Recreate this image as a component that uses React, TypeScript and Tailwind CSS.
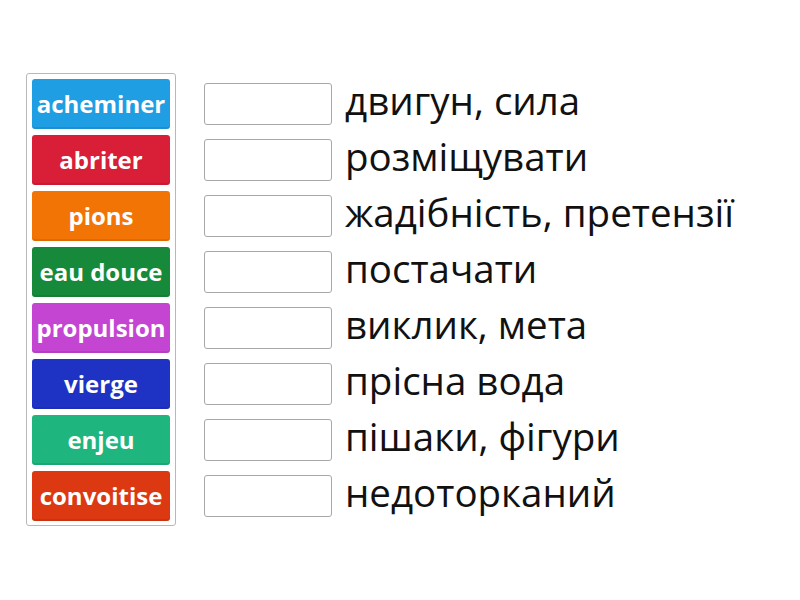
const tiles = [
  { text: 'acheminer', color: 'bg-[#1f9ee3]' },
  { text: 'abriter', color: 'bg-[#d91e38]' },
  { text: 'pions', color: 'bg-[#f27405]' },
  { text: 'eau douce', color: 'bg-[#168a3a]' },
  { text: 'propulsion', color: 'bg-[#c445d2]' },
  { text: 'vierge', color: 'bg-[#1e33c4]' },
  { text: 'enjeu', color: 'bg-[#1fb57f]' },
  { text: 'convoitise', color: 'bg-[#dc3812]' },
]

const answers = [
  'двигун, сила',
  'розміщувати',
  'жадібність, претензії',
  'постачати',
  'виклик, мета',
  'прісна вода',
  'пішаки, фігури',
  'недоторканий',
]

export default function App() {
  return (
    <div className="w-[800px] h-[600px] bg-white font-['Open_Sans',sans-serif] flex items-start pt-[73px] pl-[26px]">
      <div className="w-[150px] border border-[#b8b8b8] rounded-[3px] px-[5px] pt-[5px] pb-[4px] flex flex-col gap-[6px]">
        {tiles.map((t) => (
          <div
            key={t.text}
            className={`${t.color} h-[50px] rounded-[3px] flex items-center justify-center text-white font-bold text-[24px] whitespace-nowrap shadow-[inset_0_-2px_0_rgba(0,0,0,0.08)]`}
          >
            {t.text}
          </div>
        ))}
      </div>
      <div className="ml-[28px] pt-[6px] flex flex-col gap-[6px]">
        {answers.map((a) => (
          <div key={a} className="h-[50px] flex items-center gap-[13px]">
            <div className="w-[128px] h-[42px] border border-[#a8a8a8] rounded-[3px] bg-white" />
            <span className="text-[38.5px] text-[#111] leading-none whitespace-nowrap pb-[7px]">{a}</span>
          </div>
        ))}
      </div>
    </div>
  )
}
